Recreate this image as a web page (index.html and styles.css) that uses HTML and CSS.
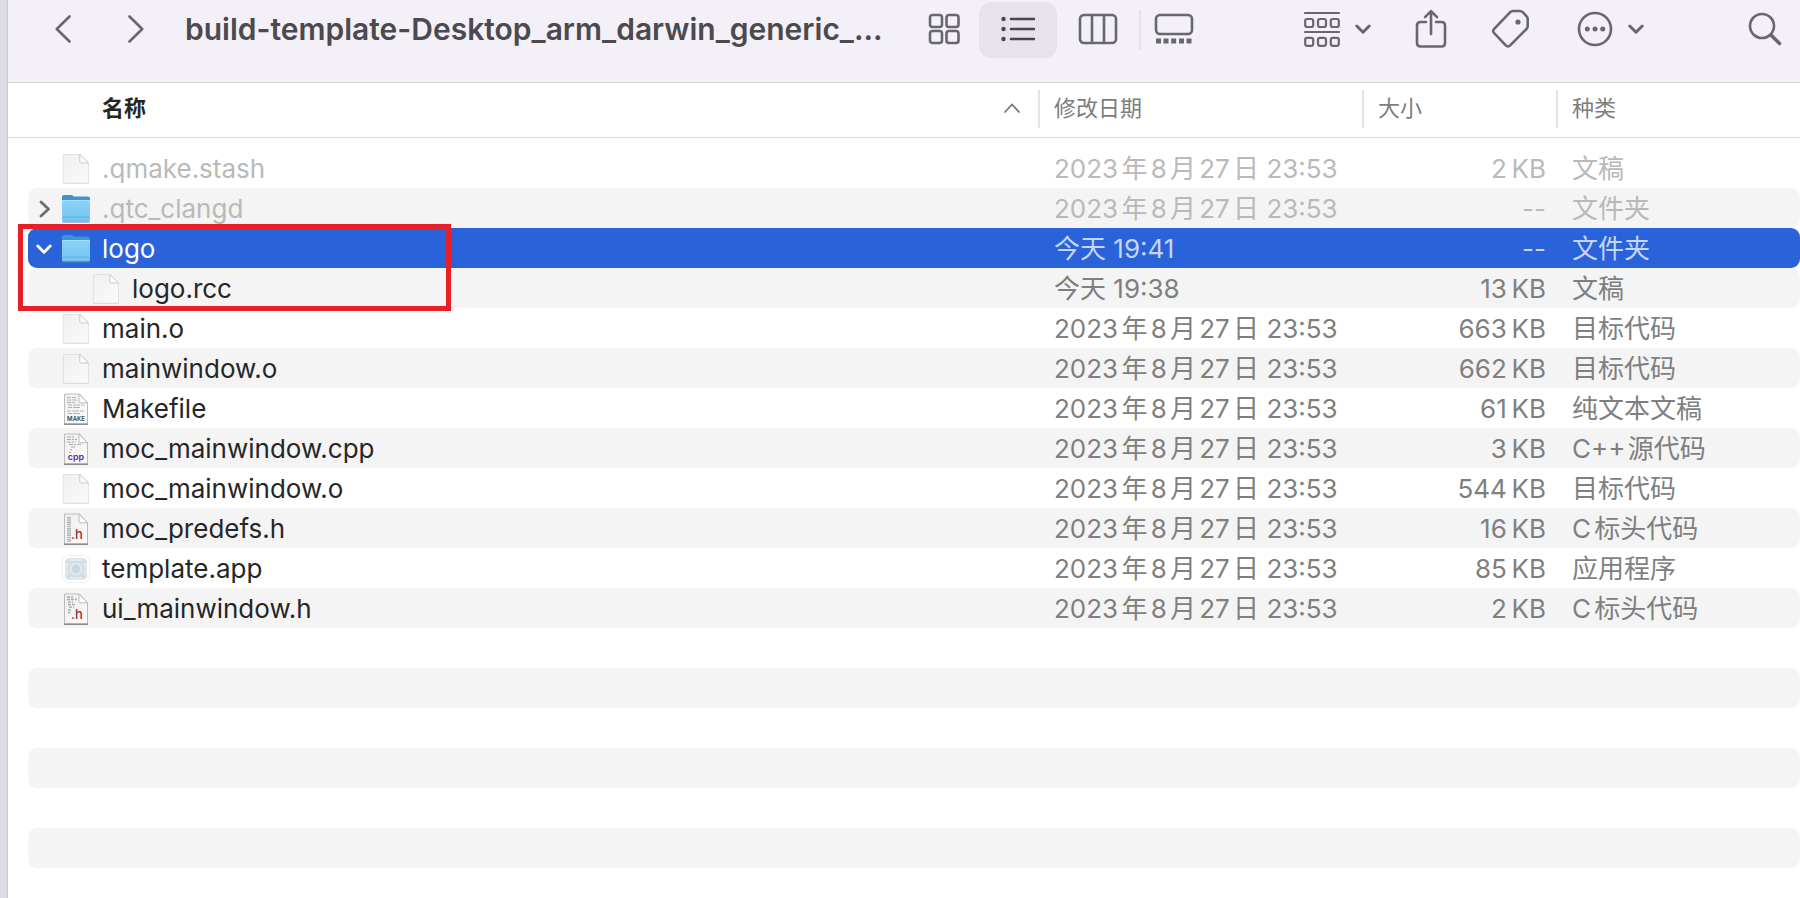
FILE: index.html
```html
<!DOCTYPE html>
<html lang="zh-CN">
<head>
<meta charset="utf-8">
<title>build-template-Desktop_arm_darwin_generic_...</title>
<link rel="stylesheet" href="styles.css">
</head>
<body>
<svg class="defs" aria-hidden="true">
  <defs>
    <linearGradient id="paper" x1="0" y1="0" x2="1" y2="1"><stop offset="0" stop-color="#efefef"/><stop offset="1" stop-color="#fbfbfb"/></linearGradient>
    <linearGradient id="sky" x1="0" y1="0" x2="0" y2="1"><stop offset="0" stop-color="#8bd3fa"/><stop offset="1" stop-color="#74c2f0"/></linearGradient>
    <symbol id="doc" viewBox="0 0 32 32">
      <path d="M3.500 30.500h25" stroke="#000" stroke-opacity=".13" stroke-width="1"/>
      <path d="M4.500 1.500h15.500l8.500 8.500v19.500q0 .7-.7.7H4.200q-.8 0-.8-.8V2.500q0-1 1.100-1z" fill="url(#paper)" stroke="#dcdcdc" stroke-width=".8"/>
      <path d="M19.800 1.500v7.700q0 .8.8.8h7.900z" fill="#fff" stroke="#c4c4c4" stroke-width=".9"/>
    </symbol>
    <symbol id="page" viewBox="0 0 32 32">
      <path d="M5 1h14.500l8 8.500v21.500H4.500V1z" fill="url(#paper)" stroke="#bdbdbd" stroke-width="1"/>
      <path d="M4 31.200h24" stroke="#777" stroke-width="1.200"/>
      <path d="M19 1v8q0 .8.8.8h7.700z" fill="#fff" stroke="#b5b5b5" stroke-width=".9"/>
    </symbol>
    <symbol id="folder" viewBox="0 0 32 32">
      <path d="M2 4q0-2 2-2h7q1.200 0 2 .8l.8.700h14.200q2 0 2 2V12H2z" fill="#3f93cf"/>
      <path d="M2 7.500h28v19.500q0 1.500-1.500 1.500h-25Q2 28.500 2 27z" fill="url(#sky)"/>
      <path d="M2 7.500h28" stroke="#a5dffc" stroke-width="1"/>
      <path d="M3 24h26" stroke="#62b0df" stroke-width="1"/>
      <path d="M2.500 29h27" stroke="#4a8fbd" stroke-width="1"/>
    </symbol>
    <symbol id="down" viewBox="0 0 16 10"><path d="M1.800 2 8 8.200 14.200 2" fill="none" stroke="currentColor" stroke-width="3" stroke-linecap="round" stroke-linejoin="round"/></symbol>
  </defs>
</svg>
<main class="window">
  <header class="toolbar">
    <nav class="history">
      <button class="tool" aria-label="后退"><svg width="16" height="28" viewBox="0 0 16 28"><path d="M14.500 1.500 1.800 14l12.700 12.500"/></svg></button>
      <button class="tool" aria-label="前进"><svg width="16" height="28" viewBox="0 0 16 28"><path d="M1.500 1.500 14.200 14 1.500 26.500"/></svg></button>
    </nav>
    <h1 class="title">build-template-Desktop_arm_darwin_generic_...</h1>
    <div class="views">
      <button class="tool" aria-label="图标"><svg width="32" height="32" viewBox="0 0 32 32"><rect x="2" y="2" width="12" height="12" rx="2.500"/><rect x="18.500" y="2" width="12" height="12" rx="2.500"/><rect x="2" y="18" width="12" height="12" rx="2.500"/><rect x="18.500" y="18" width="12" height="12" rx="2.500"/></svg></button>
      <button class="tool active" aria-label="列表" aria-pressed="true"><svg width="34" height="26" viewBox="0 0 34 26"><path d="M10 3h23M10 13h23M10 23h23"/><g class="solid"><circle cx="2.500" cy="3" r="2.200"/><circle cx="2.500" cy="13" r="2.200"/><circle cx="2.500" cy="23" r="2.200"/></g></svg></button>
      <button class="tool" aria-label="分栏"><svg width="40" height="32" viewBox="0 0 40 32"><rect x="2" y="2" width="36" height="28" rx="4"/><path d="M14 2v28M26 2v28"/></svg></button>
      <span class="divider"></span>
      <button class="tool" aria-label="画廊"><svg width="40" height="32" viewBox="0 0 40 32"><rect x="2" y="2" width="36" height="19" rx="4"/><path class="solid" d="M2 25.500h5v5H2zM9.500 25.500h5v5h-5zM17.200 25.500h5v5h-5zM25 25.500h5v5h-5zM32.500 25.500h5v5h-5z"/></svg></button>
    </div>
    <div class="actions">
      <button class="tool menu group" aria-label="分组"><svg width="36" height="36" viewBox="0 0 36 36"><path d="M1 2h34M1 21h34"/><rect x="1.200" y="8" width="8" height="8" rx="2"/><rect x="14" y="8" width="8" height="8" rx="2"/><rect x="26.800" y="8" width="8" height="8" rx="2"/><rect x="1.200" y="26.800" width="8" height="8" rx="2"/><rect x="14" y="26.800" width="8" height="8" rx="2"/><rect x="26.800" y="26.800" width="8" height="8" rx="2"/></svg><svg width="16" height="10"><use href="#down"/></svg></button>
      <button class="tool share" aria-label="共享"><svg width="32" height="40" viewBox="0 0 32 40"><path d="M11 13H5.500Q2 13 2 16.500v17.500Q2 37.500 5.500 37.500h21q3.500 0 3.500-3.500V16.500Q30 13 26.500 13H21M16 2.500V25M10 8.200 16 2.200l6 6"/></svg></button>
      <button class="tool tag" aria-label="标签"><svg width="40" height="40" viewBox="0 0 40 40"><path d="M3.200 19.800 19.200 3.200q1.200-1.200 2.900-1.200h6.700q1.700 0 2.900 1.200l3.800 4q1.200 1.200 1.200 2.900v7q0 1.700-1.200 2.900L19.200 36.300q-2.200 2.200-4.400 0L3.200 24.200q-2.200-2.200 0-4.400z"/><circle class="solid" cx="27" cy="13" r="2.600"/></svg></button>
      <button class="tool menu more" aria-label="更多"><svg width="36" height="36" viewBox="0 0 36 36"><circle cx="18" cy="18" r="16"/><g class="solid"><circle cx="10.300" cy="18" r="2.500"/><circle cx="18" cy="18" r="2.500"/><circle cx="25.700" cy="18" r="2.500"/></g></svg><svg width="16" height="10"><use href="#down"/></svg></button>
      <button class="tool search" aria-label="搜索"><svg width="34" height="34" viewBox="0 0 34 34"><circle cx="14" cy="14" r="12"/><path class="handle" d="m23 23 8.500 8.500"/></svg></button>
    </div>
  </header>
  <table class="files">
    <thead>
      <tr class="columns">
        <th scope="col" class="name-head" aria-sort="ascending"><button class="sort">名称 <svg width="16" height="10" viewBox="0 0 16 10"><path d="M1 9 8 1.500 15 9" fill="none" stroke="#777" stroke-width="1.800" stroke-linecap="round"/></svg></button></th>
        <th scope="col"><button class="sort">修改日期</button></th>
        <th scope="col"><button class="sort">大小</button></th>
        <th scope="col"><button class="sort">种类</button></th>
      </tr>
    </thead>
    <tbody>
      <tr class="row hidden-file"><td class="name"><span class="arrow"></span><svg class="icon"><use href="#doc"/></svg>.qmake.stash</td><td>2023年8月27日 23:53</td><td class="size">2&#8201;KB</td><td>文稿</td></tr>
      <tr class="row hidden-file"><td class="name"><button class="arrow" aria-label="展开"><svg width="12" height="18" viewBox="0 0 12 18"><path d="M3 2l7.500 7L3 16" fill="none" stroke="#6e6e6e" stroke-width="2.800" stroke-linecap="round" stroke-linejoin="round"/></svg></button><svg class="icon"><use href="#folder"/></svg>.qtc_clangd</td><td>2023年8月27日 23:53</td><td class="size">--</td><td>文件夹</td></tr>
      <tr class="row selected"><td class="name"><button class="arrow" aria-label="收起"><svg width="16" height="10"><use href="#down"/></svg></button><svg class="icon"><use href="#folder"/></svg>logo<span class="callout"></span></td><td>今天 19:41</td><td class="size">--</td><td>文件夹</td></tr>
      <tr class="row"><td class="name nested"><span class="arrow"></span><svg class="icon"><use href="#doc"/></svg>logo.rcc</td><td>今天 19:38</td><td class="size">13&#8201;KB</td><td>文稿</td></tr>
      <tr class="row"><td class="name"><span class="arrow"></span><svg class="icon"><use href="#doc"/></svg>main.o</td><td>2023年8月27日 23:53</td><td class="size">663&#8201;KB</td><td>目标代码</td></tr>
      <tr class="row"><td class="name"><span class="arrow"></span><svg class="icon"><use href="#doc"/></svg>mainwindow.o</td><td>2023年8月27日 23:53</td><td class="size">662&#8201;KB</td><td>目标代码</td></tr>
      <tr class="row"><td class="name"><span class="arrow"></span><svg class="icon" viewBox="0 0 32 32"><use href="#page"/><path d="M7 4.500h9M7 7h10M7 9.500h8M8 12h16M8 14.500h12M7 18h17M8 20.500h13" stroke="#aaa" stroke-width=".9" stroke-dasharray="4 1 7 1"/><text class="badge make" x="16" y="28">MAKE</text></svg>Makefile</td><td>2023年8月27日 23:53</td><td class="size">61&#8201;KB</td><td>纯文本文稿</td></tr>
      <tr class="row"><td class="name"><span class="arrow"></span><svg class="icon" viewBox="0 0 32 32"><use href="#page"/><path d="M7 4h7M7 6.500h10M7 9h9M9 11.500h12M11 14h5M10 17h2M9 19.500h2" stroke="#aaa" stroke-width="1" stroke-dasharray="4 1 2 1"/><text class="badge cpp" x="16" y="27">cpp</text></svg>moc_mainwindow.cpp</td><td>2023年8月27日 23:53</td><td class="size">3&#8201;KB</td><td>C++&#8202;源代码</td></tr>
      <tr class="row"><td class="name"><span class="arrow"></span><svg class="icon"><use href="#doc"/></svg>moc_mainwindow.o</td><td>2023年8月27日 23:53</td><td class="size">544&#8201;KB</td><td>目标代码</td></tr>
      <tr class="row"><td class="name"><span class="arrow"></span><svg class="icon" viewBox="0 0 32 32"><use href="#page"/><path d="M9 4v25" stroke="#b4b4b4" stroke-width="4" stroke-dasharray="1.500 .7"/><text class="badge head" x="17" y="26">.h</text></svg>moc_predefs.h</td><td>2023年8月27日 23:53</td><td class="size">16&#8201;KB</td><td>C标头代码</td></tr>
      <tr class="row"><td class="name"><span class="arrow"></span><svg class="icon" viewBox="0 0 32 32"><rect x="2.500" y="2.500" width="27" height="27" rx="6" fill="#fff" stroke="#f0f0f0"/><rect x="5" y="5" width="22" height="22" rx="4" fill="#e1e9ee"/><g fill="none" stroke="#cbd9e0" stroke-width=".9"><circle cx="16" cy="16" r="7.500"/><path d="M5 9h22M5 23h22M9 5v22M23 5v22M7 7l5 4M25 7l-5 4M7 25l5-4M25 25l-5-4"/></g><circle cx="16" cy="16" r="4.200" fill="#c9d8e0"/></svg>template.app</td><td>2023年8月27日 23:53</td><td class="size">85&#8201;KB</td><td>应用程序</td></tr>
      <tr class="row"><td class="name"><span class="arrow"></span><svg class="icon" viewBox="0 0 32 32"><use href="#page"/><path d="M7 4h6M7 6.500h10M8 9h5M8 11.500h7M9 14h5M8 17h3M8 19.500h2" stroke="#aaa" stroke-width="1.400" stroke-dasharray="3 1"/><text class="badge head" x="17" y="26">.h</text></svg>ui_mainwindow.h</td><td>2023年8月27日 23:53</td><td class="size">2&#8201;KB</td><td>C标头代码</td></tr>
      <tr class="row"><td></td></tr>
      <tr class="row"><td></td></tr>
      <tr class="row"><td></td></tr>
      <tr class="row"><td></td></tr>
      <tr class="row"><td></td></tr>
      <tr class="row"><td></td></tr>
    </tbody>
  </table>
</main>
</body>
</html>
```
FILE: styles.css
```css
* { box-sizing: border-box; }
body {
  margin: 0;
  padding-left: 8px;
  min-height: 100vh;
  background: linear-gradient(to right, #dfdde4 0, #dfdde4 6px, #c6c4ca 8px, #fff 8px);
  color: #262626;
  font: 26px/40px Inter, "Noto Sans CJK SC", sans-serif;
  text-autospace: normal;
}
button {
  border: 0;
  padding: 0;
  background: none;
  color: inherit;
  font: inherit;
}
.defs { position: absolute; width: 0; height: 0; }

.toolbar {
  display: flex;
  align-items: center;
  padding: 2px 5px 24px 25px;
  background: #f3f0f8;
  border-bottom: 1px solid #d6d4d9;
}
.history { display: flex; gap: 13px; }
.tool {
  display: flex;
  flex: none;
  align-items: center;
  justify-content: center;
  width: 60px;
  height: 56px;
  padding-bottom: 2px;
  color: #69666e;
}
.tool svg {
  fill: none;
  stroke: currentColor;
  stroke-width: 2.6px;
  stroke-linecap: round;
  stroke-linejoin: round;
}
.group svg { stroke-width: 2.2px; }
.tool .handle { stroke-width: 3.6px; }
.tool .solid { fill: currentColor; stroke: none; }
.title {
  flex: 1;
  min-width: 0;
  margin: 0 0 0 19px;
  padding-bottom: 2px;
  overflow: hidden;
  color: #4c494f;
  font-size: 30px;
  font-weight: 600;
  white-space: nowrap;
}
.views, .actions { display: flex; align-items: center; }
.views .tool { width: 70px; }
.views .active {
  width: 78px;
  border-radius: 12px;
  background: #e6e3ea;
  color: #48454c;
}
.views .active + .tool { width: 82px; }
.views .divider + .tool { width: 66px; }
.divider { width: 2px; height: 40px; background: #e4e1e8; }
.menu { width: 84px; gap: 15px; }
.group { margin-left: 88px; }
.share { margin-left: 22px; }
.tag { margin-left: 20px; }
.more { margin-left: 27px; }
.search { margin-left: 83px; }

.files, .files thead, .files tbody { display: block; }
.columns, .row {
  display: grid;
  grid-template-columns: minmax(0, 1fr) 324px 194px 244px;
}
.columns {
  padding: 7px 0 9px;
  border-bottom: 1px solid #dcdcdc;
}
.columns th {
  height: 38px;
  padding: 0 0 0 14px;
  border-left: 2px solid #e2e2e2;
  color: #7d7d7d;
  font-size: 22px;
  font-weight: 400;
  line-height: 36px;
  text-align: left;
}
.columns .name-head {
  padding: 0 18px 0 94px;
  border-left: 0;
  color: #262626;
  font-weight: 700;
}
.sort {
  display: flex;
  align-items: center;
  justify-content: space-between;
  width: 100%;
}
tbody { padding: 10px 0 0 20px; }
.row {
  height: 40px;
  border-radius: 9px;
  color: #7f7f7f;
}
.row:nth-child(even) { background: #f4f4f4; }
.row td { padding: 1px 0 0 16px; white-space: nowrap; }
.row .name {
  position: relative;
  display: flex;
  align-items: center;
  height: 40px;
  padding: 2px 0 0;
  color: #262626;
}
.row .nested { padding-left: 30px; }
.row .size { padding: 1px 10px 0 0; text-align: right; }
.row.hidden-file, .hidden-file .name { color: #b9b9b9; }
.row.selected { background: #2962d9; color: #c5d5f7; }
.selected .name { color: #fff; }
.arrow {
  display: flex;
  align-items: center;
  justify-content: center;
  width: 32px;
  height: 38px;
}
.icon { flex: none; width: 32px; height: 32px; margin-right: 10px; }
.badge { font-family: Inter, sans-serif; font-weight: 600; text-anchor: middle; }
.make { font-size: 6px; fill: #444; }
.cpp { font-size: 9px; fill: #5b2f9e; }
.head { font-size: 13px; font-weight: 500; fill: #9c2a2a; }
.callout {
  position: absolute;
  top: -4px;
  left: -10px;
  z-index: 1;
  width: 433px;
  height: 87px;
  border: 5px solid #e81f27;
}
```
